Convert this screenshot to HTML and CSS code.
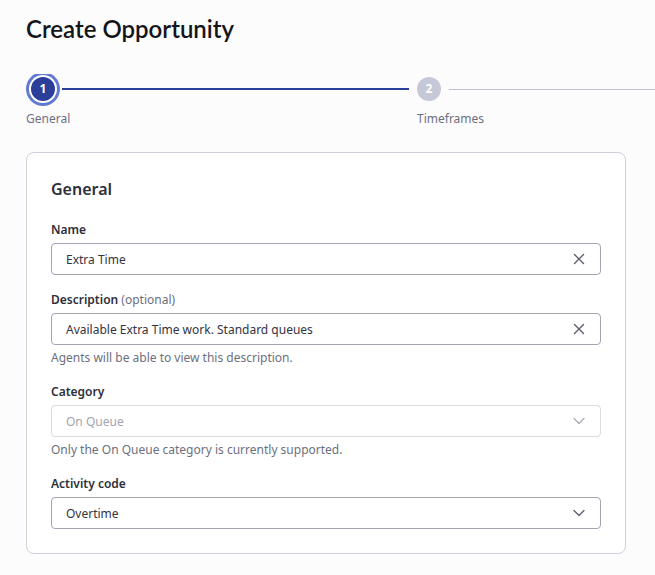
FILE: index.html
```html
<!DOCTYPE html>
<html lang="en">
<head>
<meta charset="utf-8">
<title>Create Opportunity</title>
<link rel="stylesheet" href="styles.css">
</head>
<body>
<main class="page">
  <h1 class="title">Create Opportunity</h1>

  <ol class="stepper">
    <li class="step step-active">
      <div class="step-track">
        <span class="step-dot"><span class="step-num">1</span></span>
        <span class="step-line"></span>
      </div>
      <span class="step-label">General</span>
    </li>
    <li class="step">
      <div class="step-track">
        <span class="step-dot"><span class="step-num">2</span></span>
        <span class="step-line"></span>
      </div>
      <span class="step-label">Timeframes</span>
    </li>
  </ol>

  <section class="card">
    <h2 class="card-title">General</h2>

    <div class="field">
      <label class="field-label">Name</label>
      <div class="input">
        <span class="input-value">Extra Time</span>
        <svg class="icon" viewBox="0 0 12 12" width="12" height="12"><path d="M1.5 1.5 L10.5 10.5 M10.5 1.5 L1.5 10.5" stroke="currentColor" stroke-width="1.4" fill="none" stroke-linecap="round"/></svg>
      </div>
    </div>

    <div class="field">
      <label class="field-label">Description <span class="optional">(optional)</span></label>
      <div class="input">
        <span class="input-value">Available Extra Time work. Standard queues</span>
        <svg class="icon" viewBox="0 0 12 12" width="12" height="12"><path d="M1.5 1.5 L10.5 10.5 M10.5 1.5 L1.5 10.5" stroke="currentColor" stroke-width="1.4" fill="none" stroke-linecap="round"/></svg>
      </div>
      <p class="help">Agents will be able to view this description.</p>
    </div>

    <div class="field">
      <label class="field-label">Category</label>
      <div class="input input-disabled">
        <span class="input-value">On Queue</span>
        <svg class="icon" viewBox="0 0 12 8" width="12" height="8"><path d="M1 1.5 L6 6.5 L11 1.5" stroke="currentColor" stroke-width="1.3" fill="none" stroke-linecap="round" stroke-linejoin="round"/></svg>
      </div>
      <p class="help">Only the On Queue category is currently supported.</p>
    </div>

    <div class="field">
      <label class="field-label">Activity code</label>
      <div class="input">
        <span class="input-value">Overtime</span>
        <svg class="icon" viewBox="0 0 12 8" width="12" height="8"><path d="M1 1.5 L6 6.5 L11 1.5" stroke="currentColor" stroke-width="1.3" fill="none" stroke-linecap="round" stroke-linejoin="round"/></svg>
      </div>
    </div>
  </section>
</main>
</body>
</html>
```

FILE: styles.css
```css
html, body {
  margin: 0;
  padding: 0;
  background: #fcfcfd;
  overflow: hidden;
}

body {
  font-family: "Noto Sans", "Open Sans", sans-serif;
  color: #2e2f3a;
}

.page {
  padding: 14px 0 0 26px;
}

.title {
  margin: 0;
  font-family: "Lato", "Inter", sans-serif;
  font-weight: 600;
  font-size: 24px;
  line-height: 30px;
  color: #141519;
}

.stepper {
  list-style: none;
  margin: 30px 0 0 0;
  padding: 0;
  display: flex;
  width: 629px;
  overflow: hidden;
}

.step {
  width: 391px;
  display: flex;
  flex-direction: column;
  flex: none;
}

.step-track {
  display: flex;
  align-items: center;
  height: 30px;
}

.step-dot {
  width: 24px;
  height: 24px;
  border-radius: 50%;
  background: #c5c8d6;
  color: #fff;
  display: flex;
  align-items: center;
  justify-content: center;
  flex: none;
}

.step-active .step-dot {
  background: #2b3e98;
  margin-left: 5px;
  box-shadow: 0 0 0 2px #fff, 0 0 0 5px #6279d2;
}

.step-num {
  font-size: 12px;
  font-weight: 700;
  line-height: 1;
}

.step-line {
  flex: 1;
  height: 1px;
  background: #bfc2d2;
  margin: 0 0 0 8px;
}

.step-active .step-line {
  background: #2b3e98;
  height: 1.5px;
  margin-left: 7px;
  margin-right: 8px;
}

.step-label {
  margin-top: 6px;
  font-size: 12px;
  line-height: 18px;
  color: #6c6f80;
}

.card {
  margin-top: 24px;
  width: 550px;
  padding: 24px;
  background: #fff;
  border: 1px solid #cfd0da;
  border-radius: 8px;
}

.card-title {
  margin: 0 0 18px 0;
  font-size: 16px;
  font-weight: 600;
  line-height: 24px;
  color: #2e2f3a;
}

.field + .field {
  margin-top: 14px;
}

.field-label {
  display: block;
  font-size: 12px;
  font-weight: 600;
  line-height: 20px;
  color: #2e2f3a;
  padding-top: 1px;
  margin-bottom: 3px;
}

.optional {
  font-weight: 400;
  color: #6c6f80;
}

.input {
  box-sizing: border-box;
  height: 32px;
  display: flex;
  align-items: center;
  justify-content: space-between;
  padding: 0 15px 0 14px;
  border: 1px solid #a3a5b4;
  border-radius: 4px;
  background: #fff;
  color: #33343f;
  font-size: 12px;
}

.input .icon {
  color: #5c5e6c;
  flex: none;
}

.input-disabled {
  border-color: #d9dae2;
  color: #a2a4af;
}

.input-disabled .icon {
  color: #a9abb6;
}

.help {
  margin: 3px 0 0 0;
  font-size: 12px;
  line-height: 20px;
  color: #6c6f80;
}

.field:has(.help) + .field {
  margin-top: 13px;
}
```
